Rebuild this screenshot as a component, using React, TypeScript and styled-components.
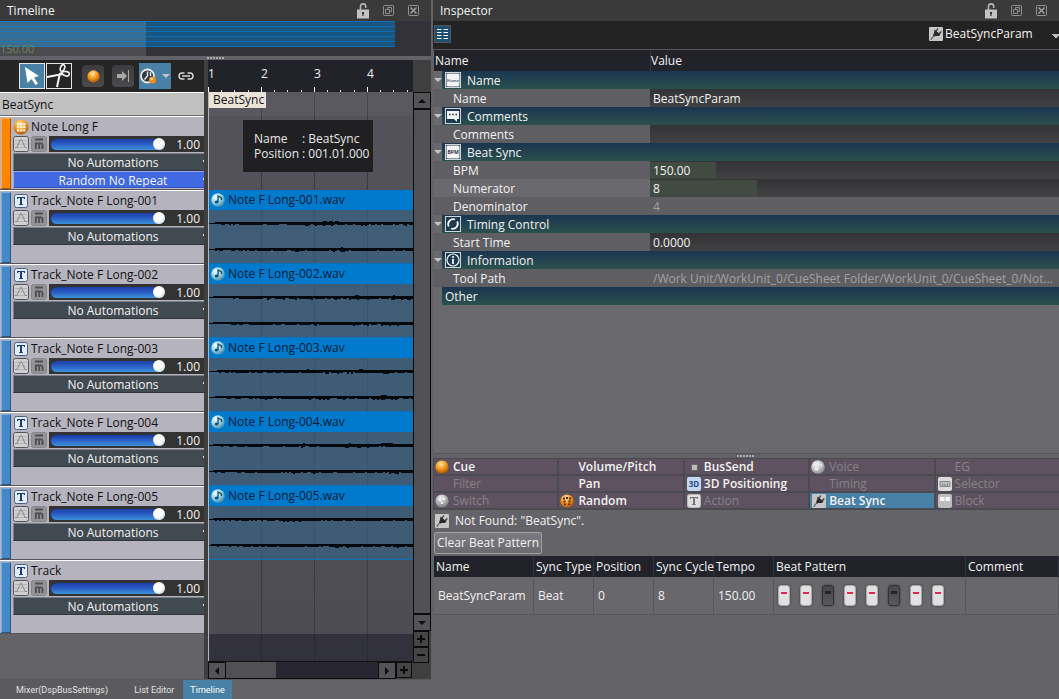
import React from "react";
import styled, { createGlobalStyle } from "styled-components";

const font = '"Open Sans", "Noto Sans", "Liberation Sans", sans-serif';

const GlobalStyle = createGlobalStyle`
  * { box-sizing: border-box; }
  body { margin: 0; background: #646367; color: #f2f2f2; font: 12px/18px ${font}; }
  button, input, select { font: inherit; color: inherit; margin: 0; padding: 0; border: 0; border-radius: 0; background: none; }
  select { appearance: none; }
  svg { display: block; flex: none; }
`;

const Page = styled.div`
  display: grid;
  grid-template-columns: minmax(0, 433fr) minmax(0, 626fr);
  min-height: 100vh;
`;

const Panel = styled.section<{ $divided?: boolean }>`
  display: flex;
  flex-direction: column;
  min-width: 0;
  background: #646367;
  border-right: ${(p) => (p.$divided ? "2px solid #626166" : "0")};
`;

/* ---------- title bars ---------- */

const TitleBar = styled.header`
  display: flex;
  align-items: center;
  height: 21px;
  padding-left: 7px;
  padding-right: 12px;
  background: #3a3a3a;
`;
const Title = styled.h2`
  flex: 1;
  margin: 0;
  font-size: 12px;
  font-weight: 400;
`;
const TitleActions = styled.div`
  display: flex;
  align-items: center;
  gap: 14px;
`;
const IconButton = styled.button`
  display: grid;
  place-items: center;
`;

const LockIcon = () => (
  <svg width="12" height="17" viewBox="1 0 12 17">
    <path d="M4.500 8V4.500a2.600 2.600 0 0 1 5.200 0V6" fill="none" stroke="#b4b4b4" strokeWidth="1.600" />
    <rect x="1" y="7.500" width="12" height="9" fill="#c2c2c2" />
    <path d="M6 10h2v2h-.4v2h-1.200v-2H6z" fill="#333" />
  </svg>
);
const FloatIcon = () => (
  <svg width="11" height="11" viewBox="0 0 11 11" fill="none" stroke="#a3a3a3">
    <rect x=".5" y=".5" width="10" height="10" rx="1" strokeOpacity=".8" />
    <path d="M4.500 4V2.500h4v4H7M2.500 4.500h4v4h-4z" strokeOpacity=".8" />
  </svg>
);
const CloseIcon = () => (
  <svg width="11" height="11" viewBox="0 0 11 11" fill="none" stroke="#a8a8a8">
    <rect x=".5" y=".5" width="10" height="10" rx="1" strokeOpacity=".8" />
    <path d="M2.500 2.500l6 6M8.500 2.500l-6 6" strokeWidth="1.300" />
  </svg>
);

function PanelTitle({ children }: { children: string }) {
  return (
    <TitleBar>
      <Title>{children}</Title>
      <TitleActions>
        <IconButton aria-label="Lock"><LockIcon /></IconButton>
        <IconButton aria-label="Float"><FloatIcon /></IconButton>
        <IconButton aria-label="Close"><CloseIcon /></IconButton>
      </TitleActions>
    </TitleBar>
  );
}

/* ---------- overview ---------- */

const Overview = styled.div`
  display: grid;
  grid-template-columns: 146fr 249fr 36fr;
  height: 35px;
  background: #333238;
`;
const OverviewPart = styled.div<{ $view?: boolean }>`
  display: flex;
  flex-direction: column;
  justify-content: flex-end;
  background:
    repeating-linear-gradient(${(p) => (p.$view ? "#1f78b8" : "#0c6fb5")} 0 1px, ${(p) => (p.$view ? "#3a6c90" : "#1a557f")} 1px 5px) 0 0 / 100% 26px no-repeat,
    ${(p) => (p.$view ? "#4c4b50" : "#333238")};
`;
const OverviewTempo = styled.span`
  font-size: 11px;
  line-height: 14px;
  color: #718258;
`;
const Splitter = styled.div`
  display: flex;
  align-items: center;
  justify-content: center;
  height: 4px;
  background: #636267;
`;
const Grip = styled.span`
  width: 18px;
  height: 2px;
  background: repeating-linear-gradient(90deg, #aaa 0 2px, transparent 2px 3px);
`;

/* ---------- timeline editor ---------- */

const Editor = styled.div`
  display: flex;
  flex: 1;
  background: #3f3f3f;
`;
const TrackColumn = styled.div`
  display: flex;
  flex-direction: column;
  flex: 0 0 204px;
  width: 204px;
  margin-right: 4px;
  background: #646367;
`;
const Toolbar = styled.div`
  display: flex;
  align-items: center;
  height: 32px;
  padding-left: 19px;
  background: #252525;
`;
const ToolButton = styled.button<{ $kind?: "mode" | "soft" | "menu"; $active?: boolean; $gap?: number }>`
  display: flex;
  align-items: center;
  justify-content: center;
  gap: 5px;
  margin-left: ${(p) => p.$gap ?? 0}px;
  width: ${(p) => (p.$kind === "mode" ? 26 : p.$kind === "menu" ? 32 : p.$kind === "soft" ? 22 : 16)}px;
  height: ${(p) => (p.$kind === "soft" ? 22 : 26)}px;
  border: ${(p) => (p.$kind === "mode" ? "1px solid #e4e4e4" : "0")};
  border-radius: ${(p) => (p.$kind === "soft" ? "4px" : "0")};
  background: ${(p) => (p.$active || p.$kind === "menu" ? "#4880a6" : p.$kind === "soft" ? "linear-gradient(#3c3c3f, #4a4a4d)" : "none")};
`;
const SequenceName = styled.div`
  height: 24px;
  padding-left: 2px;
  border-top: 1px solid #fff;
  border-bottom: 1px solid #6b6b70;
  background: #c0c0c0;
  color: #111;
  line-height: 23px;
`;

const Track = styled.article<{ $accent: string }>`
  display: grid;
  grid-template-columns: 10px minmax(0, 1fr);
  column-gap: 2px;
  height: 74px;
  padding-left: 1px;
  border-top: 1px solid #fff;
  border-bottom: 1px solid #55555a;
  background: #b5b4be;
  &::before {
    content: "";
    margin-top: 1px;
    background: ${(p) => p.$accent};
    border: 1px solid rgba(0, 0, 0, 0.35);
    border-top-color: rgba(255, 255, 255, 0.3);
    border-left-color: rgba(255, 255, 255, 0.3);
  }
`;
const TrackName = styled.div`
  display: flex;
  align-items: center;
  gap: 2px;
  height: 19px;
  color: #111;
  line-height: 16px;
  white-space: nowrap;
`;
const TrackControls = styled.div`
  display: flex;
  gap: 2px;
  height: 16px;
  margin-bottom: 1px;
`;
const Volume = styled.div`
  display: flex;
  flex: 1;
  align-items: center;
  justify-content: space-between;
  height: 16px;
  padding: 0 4px 0 2px;
  background: #333;
  color: #f4f4f4;
  output { padding-top: 2px; }
`;
const VolumeSlider = styled.input`
  appearance: none;
  width: 114px;
  height: 11px;
  border-radius: 6px;
  background: linear-gradient(#1b3da6, #2b60c8 50%, #3c93dc);
  &::-webkit-slider-thumb {
    appearance: none;
    width: 12px;
    height: 12px;
    border-radius: 6px;
    background: radial-gradient(circle at 40% 35%, #fff 40%, #c9c9c9);
  }
`;
const TrackSelect = styled.select<{ $mode?: boolean }>`
  display: block;
  width: 100%;
  height: ${(p) => (p.$mode ? 17 : 18)}px;
  padding-top: 1px;
  padding-left: 8px;
  text-align: center;
  text-align-last: center;
  line-height: 16px;
  color: #f4f4f4;
  border-top: 1px solid ${(p) => (p.$mode ? "#98a7ee" : "#7c7f88")};
  border-left: 1px solid ${(p) => (p.$mode ? "#98a7ee" : "#7c7f88")};
  border-bottom: 1px solid ${(p) => (p.$mode ? "#3a53c4" : "#30353c")};
  background:
    linear-gradient(#ddd, #ddd) right 0 top 6px / 1px 2px no-repeat,
    ${(p) => (p.$mode ? "#4169e1" : "#414951")};
`;

const BallIcon = ({ size = 14, gray = false, children }: { size?: number; gray?: boolean; children?: React.ReactNode }) => {
  const id = gray ? "ball-gray" : "ball-orange";
  return (
    <svg width={size} height={size} viewBox="0 0 14 14">
      <defs>
        <radialGradient id={id} cx=".42" cy=".28" r=".75">
          <stop offset="0" stopColor={gray ? "#f2f2f2" : "#ffe2a8"} />
          <stop offset=".5" stopColor={gray ? "#b5b5b5" : "#f59a1e"} />
          <stop offset="1" stopColor={gray ? "#777" : "#a65200"} />
        </radialGradient>
      </defs>
      <circle cx="7" cy="7" r="6.600" fill={`url(#${id})`} />
      {children}
    </svg>
  );
};
const GridBall = () => (
  <BallIcon size={16}>
    <path d="M3.500 3.500h2v2h-2zM6.200 3.500h2v2h-2zM8.900 3.500h2v2h-2zM3.500 6.200h2v2h-2zM6.200 6.200h2v2h-2zM8.900 6.200h2v2h-2zM3.500 8.900h2v2h-2zM6.200 8.900h2v2h-2zM8.900 8.900h2v2h-2z" fill="#fff6e4" />
  </BallIcon>
);
const TrackIcon = ({ gray = false }: { gray?: boolean }) => (
  <svg width="16" height="14" viewBox="0 0 16 14">
    <rect x="1.500" y=".5" width="13" height="13" rx="2" fill={gray ? "#dedede" : "#e3ecf8"} stroke={gray ? "#bbb" : "#46628c"} />
    <path d="M4 5V3h8v2h-1l-.3-1H9v6l1 .3V11H6v-.7L7 10V4H5.300L5 5z" fill={gray ? "#777" : "#17407c"} />
  </svg>
);
const CurveIcon = () => (
  <svg width="16" height="16" viewBox="0 0 16 16">
    <rect x=".5" y=".5" width="15" height="15" rx="2" fill="#cfcfd0" stroke="#54545a" />
    <path d="M2 4.500h12M2 8h12M2 11.500h12" stroke="#b4b4b6" />
    <path d="M2 11.500h2L7.500 3.500h1L12 11.500h2" fill="none" stroke="#8a8a8d" />
  </svg>
);
const MuteIcon = () => (
  <svg width="16" height="16" viewBox="0 0 16 16">
    <rect x=".5" y=".5" width="15" height="15" rx="2" fill="#949496" stroke="#85858a" />
    <path d="M4 3.500h8" stroke="#4f4f52" strokeWidth="2" />
    <path d="M4.900 13V6.500M4 7.400h6.200a1.500 1.500 0 0 1 1.300 1.400V13M8.200 13V7.500" fill="none" stroke="#4f4f52" strokeWidth="1.900" />
  </svg>
);

function TrackHeader({ name, mode }: { name: string; mode?: string }) {
  return (
    <Track $accent={mode ? "#ff8400" : "#4389ca"}>
      <div>
        <TrackName>{mode ? <GridBall /> : <TrackIcon />}{name}</TrackName>
        <TrackControls>
          <IconButton aria-label={`Curve ${name}`}><CurveIcon /></IconButton>
          <IconButton aria-label={`Mute ${name}`}><MuteIcon /></IconButton>
          <Volume>
            <VolumeSlider type="range" min="0" max="1" step="0.01" defaultValue="1" aria-label={`Volume ${name}`} />
            <output>1.00</output>
          </Volume>
        </TrackControls>
        <TrackSelect aria-label={`Automations ${name}`}><option>No Automations</option></TrackSelect>
        {mode && <TrackSelect $mode aria-label={`Playback ${name}`}><option>{mode}</option></TrackSelect>}
      </div>
    </Track>
  );
}

const LaneColumn = styled.div`
  display: flex;
  flex-direction: column;
  flex: 1;
  min-width: 0;
`;
const Ruler = styled.div`
  display: grid;
  grid-template-columns: repeat(4, 53px);
  height: 32px;
  overflow: hidden;
  background-color: #22222b;
  background-image:
    linear-gradient(90deg, #fff 1px, transparent 1px),
    linear-gradient(90deg, transparent 13px, #ddd 13px 14px, transparent 14px 26px, #ddd 26px 27px, transparent 27px 40px, #ddd 40px 41px, transparent 41px);
  background-size: 53px 5px, 53px 2px;
  background-position: 0 100%;
  background-repeat: repeat-x;
  line-height: 28px;
`;
const Lanes = styled.div`
  position: relative;
  flex: 1;
  display: flex;
  flex-direction: column;
  border-left: 1px solid #b5b5b5;
  background:
    repeating-linear-gradient(90deg, transparent 0 52px, #3b3b3f 52px 53px),
    linear-gradient(#54535c, #4d4c54);
`;
const MarkerLane = styled.div`
  height: 24px;
  background: rgba(115, 115, 122, 0.2);
`;
const Marker = styled.div`
  width: fit-content;
  padding: 0 2px 0 4px;
  background: #e9e4d7;
  color: #16161c;
  line-height: 16px;
`;
const GroupLane = styled.div`
  height: 74px;
`;
const Clip = styled.div`
  height: 74px;
  border-bottom: 1px solid #0a72b8;
  background: rgba(51, 101, 138, 0.6);
`;
const ClipName = styled.div`
  display: flex;
  align-items: center;
  gap: 3px;
  height: 20px;
  padding-left: 2px;
  background: #007acc;
  color: #0a1b33;
  white-space: nowrap;
`;
const LaneEnd = styled.div`
  flex: 1;
  margin-top: 74px;
  background: rgba(30, 30, 42, 0.55);
`;
const Hint = styled.dl`
  position: absolute;
  left: 34px;
  top: 28px;
  display: grid;
  grid-template-columns: 48px 1fr;
  width: 130px;
  margin: 0;
  padding: 11px;
  background: rgba(30, 30, 32, 0.96);
  line-height: 15px;
  color: #e8e8e8;
  dt, dd { margin: 0; white-space: nowrap; }
`;

const NoteIcon = ({ gray = false }: { gray?: boolean }) => (
  <svg width="14" height="14" viewBox="0 0 14 14">
    <defs>
      <radialGradient id={gray ? "note-gray" : "note-blue"} cx=".35" cy=".3" r=".8">
        <stop offset="0" stopColor="#f4fcff" />
        <stop offset=".55" stopColor={gray ? "#bcbcbc" : "#8fcbe0"} />
        <stop offset="1" stopColor={gray ? "#888" : "#2f7fa0"} />
      </radialGradient>
    </defs>
    <circle cx="7" cy="7" r="6.800" fill={`url(#${gray ? "note-gray" : "note-blue"})`} />
    <path d="M7 9V3l3.500 2v2M7 9" fill="none" stroke={gray ? "#eee" : "#14506e"} strokeWidth="1.300" />
    <ellipse cx="5.600" cy="9" rx="1.900" ry="1.600" fill={gray ? "#eee" : "#14506e"} />
  </svg>
);

function wavePath(seed: number, center: number) {
  let s = seed * 7919 + 13;
  const next = () => {
    s = (s * 16807) % 2147483647;
    return s / 2147483647;
  };
  let d = "";
  let level = 0;
  for (let x = 0; x < 204; x += 2) {
    level = level * 0.8 + next() * 0.32;
    const grow = Math.min(1, 0.3 + x / 120);
    const up = Math.round(0.4 + level * grow);
    const down = Math.round(0.3 + level * grow * next() * 1.6);
    const h = x < 28 && next() < 0.4 ? 1 : up + down + 1;
    d += `M${x} ${center - up}h2v${h}h-2z`;
  }
  return d;
}
const Waveform = ({ seed }: { seed: number }) => (
  <svg width="100%" height="53" viewBox="0 0 204 53" preserveAspectRatio="none" shapeRendering="crispEdges">
    <path d={wavePath(seed, 13) + wavePath(seed + 40, 39)} fill="#05080c" />
    <path d="M0 13h204v1H0zM0 39h204v1H0z" fill="#05080c" />
  </svg>
);

/* ---------- scroll bars ---------- */

const ScrollColumn = styled.div`
  display: flex;
  flex-direction: column;
  flex: 0 0 18px;
  padding: 32px 0 16px;
`;
const ScrollRow = styled.div`
  display: flex;
  height: 18px;
  padding-right: 1px;
  border-top: 1px solid #111;
`;
const ScrollButton = styled.button<{ $dark?: boolean }>`
  display: grid;
  place-items: center;
  flex: none;
  width: 18px;
  height: 17px;
  border: 1px solid #0c0c0c;
  background: ${(p) => (p.$dark ? "#454548" : "#545357")};
`;
const ZoomButton = styled(ScrollButton)`
  width: 16px;
  height: 16px;
`;
const ScrollTrack = styled.div<{ $vertical?: boolean }>`
  flex: 1;
  border: solid #0c0c0c;
  border-width: ${(p) => (p.$vertical ? "1px 1px" : "0 0 1px")};
  background: ${(p) => (p.$vertical ? "#525155" : "linear-gradient(90deg, #515055 33%, #272631 33%)")};
`;
const Arrow = ({ turn }: { turn: number }) => (
  <svg width="8" height="8" viewBox="0 0 8 8"><path d="M0 6L4 2l4 4z" fill="#0e0e10" transform={`rotate(${turn} 4 4)`} /></svg>
);
const Plus = ({ minus = false }: { minus?: boolean }) => (
  <svg width="8" height="8" viewBox="0 0 8 8"><path d={minus ? "M0 4h8" : "M0 4h8M4 0v8"} stroke="#0b0b0b" strokeWidth="2" /></svg>
);

const DockTabs = styled.nav`
  display: flex;
  height: 20px;
  background: #636267;
  border-top: 1px solid #59585c;
`;
const DockTab = styled.button<{ $active?: boolean }>`
  padding: 0 ${(p) => (p.$active ? 7 : 9)}px;
  font-family: Roboto, "Liberation Sans", sans-serif;
  font-size: 9px;
  line-height: 18px;
  white-space: nowrap;
  color: ${(p) => (p.$active ? "#fff" : "#e2e2e2")};
  background: ${(p) => (p.$active ? "#4880a6" : "#5b5a5e")};
  &:first-child { padding: 0 17px 0 16px; }
`;

/* ---------- inspector ---------- */

const InspectorBar = styled.div`
  display: flex;
  align-items: center;
  justify-content: space-between;
  height: 29px;
  padding-left: 1px;
  padding-bottom: 2px;
  border-bottom: 1px solid #55545a;
  background: #232323;
`;
const ParamPicker = styled.label`
  display: flex;
  align-items: center;
  gap: 1px;
`;
const ParamSelect = styled.select`
  width: 114px;
  height: 18px;
  background: linear-gradient(45deg, transparent 50%, #bbb 50%) right 3px top 9px / 4px 4px no-repeat,
    linear-gradient(-45deg, transparent 50%, #bbb 50%) right -1px top 9px / 4px 4px no-repeat;
`;
const PropertyTable = styled.table`
  width: 100%;
  padding-left: 1px;
  border-spacing: 0;
  table-layout: fixed;
  th, td { padding: 0; height: 18px; text-align: left; font-weight: 400; }
  thead th { height: 21px; padding-left: 1px; background: #22222b; }
  thead th + th { padding-left: 0; border-left: 1px solid #36363f; }
`;
const NameCol = styled.col`
  width: 216px;
`;
const TwistyIcon = () => (
  <svg width="8" height="4" viewBox="0 0 8 4"><path d="M0 0h8L4 4z" fill="#c4c4c4" /></svg>
);
const GroupRow = styled.div`
  display: flex;
  align-items: center;
  background: #69686c;
`;
const Gutter = styled.button`
  flex: none;
  width: 8px;
  height: 18px;
  display: grid;
  place-items: center;
`;
const GroupTitle = styled.div`
  display: flex;
  flex: 1;
  align-items: center;
  gap: 6px;
  height: 18px;
  padding-left: 3px;
  background: linear-gradient(#1b3551, #2a504d);
  span { padding-top: 2px; }
`;
const PropertyLabel = styled.label<{ $alt?: boolean }>`
  display: block;
  height: 18px;
  padding-top: 1px;
  padding-left: 19px;
  line-height: 17px;
  background: ${(p) => (p.$alt ? "#6a696d" : "#5f5e62")};
`;
const PropertyInput = styled.input<{ $fill?: number }>`
  display: block;
  width: 100%;
  height: 18px;
  padding-top: 1px;
  padding-left: 3px;
  text-overflow: ellipsis;
  background:
    linear-gradient(#414b42, #414b42) 0 1px / ${(p) => p.$fill ?? 0}px 16px no-repeat,
    linear-gradient(#333335, #424245);
  &:disabled { color: #a2a2a4; background: #5f5e62; }
`;
const Spacer = styled.div`
  flex: 1;
  margin-left: 1px;
  background: #69686c;
  border-bottom: 1px solid #55545a;
`;

type IconKind = "name" | "comment" | "bpm" | "cycle" | "info";
const GroupIcon = ({ kind }: { kind: IconKind }) => (
  <svg width="16" height="16" viewBox="0 0 16 16">
    <rect x=".5" y=".5" width="15" height="15" fill="#1c3b50" stroke="#cfd6d8" />
    {(kind === "name" || kind === "bpm") && <rect x="1.500" y="1.500" width="13" height="13" rx="1" fill="#f4f4f4" />}
    {kind === "name" && <text x="8" y="9.500" textAnchor="middle" fontSize="4" fontWeight="700" fill="#667">Home</text>}
    {kind === "bpm" && <text x="8" y="10" textAnchor="middle" fontSize="5" fontWeight="700" fill="#334">BPM</text>}
    {kind === "comment" && <><path d="M2 3h12v8h-2v3L9 11H2z" fill="#f4f4f4" /><path d="M4 6.500h1.500M7.200 6.500h1.500M10.500 6.500H12" stroke="#234" strokeWidth="1.300" /></>}
    {kind === "cycle" && <g fill="none" stroke="#f4f4f4" strokeWidth="1.800"><path d="M3.800 10.500A5 5 0 0 1 10 3.500" /><path d="M12.200 5.500A5 5 0 0 1 6 12.500" /></g>}
    {kind === "info" && <g fill="none" stroke="#f4f4f4"><circle cx="8" cy="8" r="6" strokeWidth="1.200" /><path d="M8 4v1.700M8 6.800V12" strokeWidth="1.800" /></g>}
  </svg>
);
const PlugIcon = () => (
  <svg width="16" height="14" viewBox="0 0 16 14">
    <rect x="1" y="0" width="14" height="14" rx="1" fill="#c6c6c6" />
    <path d="M3 13c0-2 1.500-3 3.500-4.500" fill="none" stroke="#6b6b6b" strokeWidth="1.200" />
    <path d="M6.500 2.500l6 5-1.500 1.500H7.500L6 9.500 5 8l1-2z" fill="#2b2b2b" />
    <path d="M8 4.500L9.700 1.500M11 7l2.300-2.500" stroke="#3a3a3a" strokeWidth="1.300" />
  </svg>
);

type Property = { label: string; value: string; fill?: number; off?: boolean; alt?: boolean };
const groups: { title: string; icon?: IconKind; rows: Property[] }[] = [
  { title: "Name", icon: "name", rows: [{ label: "Name", value: "BeatSyncParam" }] },
  { title: "Comments", icon: "comment", rows: [{ label: "Comments", value: "" }] },
  {
    title: "Beat Sync",
    icon: "bpm",
    rows: [
      { label: "BPM", value: "150.00", fill: 66 },
      { label: "Numerator", value: "8", fill: 107, alt: true },
      { label: "Denominator", value: "4", off: true },
    ],
  },
  { title: "Timing Control", icon: "cycle", rows: [{ label: "Start Time", value: "0.0000" }] },
  {
    title: "Information",
    icon: "info",
    rows: [{ label: "Tool Path", value: "/Work Unit/WorkUnit_0/CueSheet Folder/WorkUnit_0/CueSheet_0/Note Long F/BeatSyncParam", off: true }],
  },
  { title: "Other", rows: [] },
];

/* ---------- parameter tabs ---------- */

const ParamTabs = styled.div`
  display: grid;
  grid-template-columns: repeat(5, minmax(0, 1fr));
  gap: 2px;
  padding: 1px 0 2px 1px;
  background: #4a4a52;
`;
const ParamTab = styled.button<{ $active?: boolean }>`
  display: grid;
  grid-template-columns: 16px 1fr;
  align-items: center;
  column-gap: 2px;
  height: 15px;
  padding-left: 1px;
  overflow: hidden;
  text-align: left;
  line-height: 15px;
  font-weight: 600;
  white-space: nowrap;
  background: ${(p) => (p.$active ? "#4880a6" : "#5f5260")};
  &:disabled { font-weight: 400; color: #858288; }
`;
const TabIcon = ({ kind }: { kind?: string }) => {
  switch (kind) {
    case "cue": return <BallIcon />;
    case "switch": return <BallIcon gray><path d="M4 5h2v2H4zM8 4h2v2H8zM6 8h2v2H6z" fill="#eee" /></BallIcon>;
    case "random": return <BallIcon><path d="M3 3.500h2v2H3zM6 3h2v2H6zM9 3.500h2v2H9zM3.500 6.500h2v2h-2zM8.500 6.500h2v2h-2zM4 9.500h2v1.500H4zM8 9.500h2v1.500H8z" fill="#5b2b00" /></BallIcon>;
    case "voice": return <NoteIcon gray />;
    case "send": return <svg width="16" height="14"><rect x="5.500" y="4.500" width="6" height="6" fill="#bbb" stroke="#666" /></svg>;
    case "3d": return <svg width="16" height="14"><rect x="1" width="14" height="14" rx="2" fill="#c6d7f0" /><text x="8" y="10" textAnchor="middle" fontSize="8" fontWeight="700" fill="#274b8c">3D</text></svg>;
    case "action": return <TrackIcon gray />;
    case "plug": return <PlugIcon />;
    case "selector": return <svg width="16" height="14"><rect x="1" width="14" height="14" rx="2" fill="#dcdcdc" /><path d="M3 4.500h10v5H3z" fill="#bbb" stroke="#888" /><path d="M5 8h1M7.500 8h1M10 8h1" stroke="#444" /></svg>;
    case "block": return <svg width="16" height="14"><rect x="1" width="14" height="14" rx="2" fill="#bdbdbd" /><path d="M3 3h4.500v4H3zM8.500 3H13v4H8.500z" fill="#f6f6f6" /></svg>;
    default: return <span />;
  }
};
const paramTabs: { name: string; icon?: string; off?: boolean }[] = [
  { name: "Cue", icon: "cue" }, { name: "Volume/Pitch" }, { name: "BusSend", icon: "send" }, { name: "Voice", icon: "voice", off: true }, { name: "EG", off: true },
  { name: "Filter", off: true }, { name: "Pan" }, { name: "3D Positioning", icon: "3d" }, { name: "Timing", off: true }, { name: "Selector", icon: "selector", off: true },
  { name: "Switch", icon: "switch", off: true }, { name: "Random", icon: "random" }, { name: "Action", icon: "action", off: true }, { name: "Beat Sync", icon: "plug" }, { name: "Block", icon: "block", off: true },
];

/* ---------- beat sync pane ---------- */

const BeatPane = styled.div`
  display: flex;
  flex-direction: column;
  align-items: flex-start;
  min-height: 189px;
  padding-left: 1px;
`;
const Status = styled.p`
  display: flex;
  align-items: center;
  gap: 5px;
  height: 22px;
  margin: 0;
`;
const ClearButton = styled.button`
  height: 22px;
  margin: 0 0 2px;
  padding: 0 2px;
  border: 1px solid #a0a0a0;
  border-radius: 2px;
  background: linear-gradient(#7c7b7f, #6b6a6e);
`;
const BeatTable = styled.table`
  width: 100%;
  border-spacing: 0;
  table-layout: fixed;
  th, td { text-align: left; font-weight: 400; white-space: nowrap; }
  th { height: 21px; padding: 0 0 0 2px; background: #22222b; border-right: 1px solid #33333d; }
  td { height: 38px; padding: 0 0 0 4px; background: #68676b; border: solid #58575b; border-width: 0 1px 1px 0; }
`;
const BeatCol = styled.col<{ $width?: number }>`
  width: ${(p) => (p.$width ? p.$width + "px" : "auto")};
`;
const Beats = styled.div`
  display: flex;
  gap: 10px;
`;
const Beat = styled.input`
  appearance: none;
  width: 12px;
  height: 21px;
  border-radius: 3px;
  border: 1px solid #333337;
  background: linear-gradient(#242426, #242426) 2px 5px / 6px 3px no-repeat, linear-gradient(#47474a, #59595c);
  box-shadow: 0 0 2px #333;
  &:checked {
    border-color: #a9a9ab;
    background: linear-gradient(#e2264d, #e2264d) 2px 6px / 6px 2px no-repeat, #e1e1e1;
  }
`;

const clips = ["001", "002", "003", "004", "005"];

export default function App() {
  return (
    <>
      <GlobalStyle />
      <Page>
        <Panel $divided>
          <PanelTitle>Timeline</PanelTitle>
          <Overview>
            <OverviewPart $view><OverviewTempo>150.00</OverviewTempo></OverviewPart>
            <OverviewPart />
          </Overview>
          <Splitter><Grip /></Splitter>
          <Editor>
            <TrackColumn>
              <Toolbar>
                <ToolButton $kind="mode" $active aria-label="Select">
                  <svg width="20" height="22" viewBox="0 0 20 22"><path d="M3 2l14 9-5 1.500 4 6-2.500 1.500-4-6L5.500 18z" fill="#fff" /></svg>
                </ToolButton>
                <ToolButton $kind="mode" $gap={1} aria-label="Cut">
                  <svg width="24" height="24" viewBox="0 0 24 24" fill="none" stroke="#f5f5f5" strokeWidth="1.600">
                    <path d="M0 13l16-3M10 23l3-14" strokeWidth="2" />
                    <ellipse cx="15.500" cy="4" rx="2" ry="3.500" transform="rotate(20 15.500 4)" />
                    <path d="M14 9c2-2 5-2 8-.5 1 2-.5 4-3 3.500-2-.5-3-1.500-5-3z" />
                  </svg>
                </ToolButton>
                <ToolButton $kind="soft" $gap={10} aria-label="Add cue"><BallIcon size={13} /></ToolButton>
                <ToolButton $kind="soft" $gap={8} aria-label="Snap to end">
                  <svg width="14" height="14" viewBox="0 0 14 14"><path d="M1 5h5V2l5 5-5 5V9H1z" fill="#a8a8a8" /><path d="M12.500 1v12" stroke="#a8a8a8" /></svg>
                </ToolButton>
                <ToolButton $kind="menu" $gap={5} aria-label="Playback timing">
                  <svg width="17" height="17" viewBox="0 0 17 17">
                    <circle cx="7.500" cy="8" r="6.500" fill="#2c3b46" stroke="#e8e8e8" strokeWidth="1.800" />
                    <path d="M7.500 3.500V8L4.500 11.500M10.500 4v4" fill="none" stroke="#e8e8e8" strokeWidth="1.400" />
                    <circle cx="12.500" cy="12" r="3.600" fill="#f08a22" /><circle cx="11.800" cy="11" r="1.300" fill="#ffd9a0" />
                  </svg>
                  <TwistyIcon />
                </ToolButton>
                <ToolButton $gap={7} aria-label="Link">
                  <svg width="16" height="8" viewBox="0 0 16 8" fill="none" stroke="#d8d8d8" strokeWidth="1.400"><path d="M6.500 1H4a3 3 0 0 0 0 6h2.500M9.500 1H12a3 3 0 0 1 0 6H9.500" /><path d="M4 4h8" stroke="#a8a8a8" strokeWidth="2" /></svg>
                </ToolButton>
              </Toolbar>
              <SequenceName>BeatSync</SequenceName>
              <TrackHeader name="Note Long F" mode="Random No Repeat" />
              {clips.map((c) => <TrackHeader key={c} name={`Track_Note F Long-${c}`} />)}
              <TrackHeader name="Track" />
            </TrackColumn>
            <LaneColumn>
              <Ruler>{["1", "2", "3", "4"].map((n) => <span key={n}>{n}</span>)}</Ruler>
              <Lanes>
                <MarkerLane><Marker>BeatSync</Marker></MarkerLane>
                <GroupLane />
                {clips.map((c, i) => (
                  <Clip key={c}>
                    <ClipName><NoteIcon />Note F Long-{c}.wav</ClipName>
                    <Waveform seed={i + 3} />
                  </Clip>
                ))}
                <LaneEnd />
                <Hint>
                  <dt>Name</dt><dd>: BeatSync</dd>
                  <dt>Position</dt><dd>: 001.01.000</dd>
                </Hint>
              </Lanes>
              <ScrollRow>
                <ScrollButton aria-label="Scroll left"><Arrow turn={-90} /></ScrollButton>
                <ScrollTrack />
                <ScrollButton aria-label="Scroll right"><Arrow turn={90} /></ScrollButton>
                <ZoomButton $dark aria-label="Zoom in time"><Plus /></ZoomButton>
              </ScrollRow>
            </LaneColumn>
            <ScrollColumn>
              <ScrollButton aria-label="Scroll up"><Arrow turn={0} /></ScrollButton>
              <ScrollTrack $vertical />
              <ScrollButton aria-label="Scroll down"><Arrow turn={180} /></ScrollButton>
              <ZoomButton $dark aria-label="Zoom in tracks"><Plus /></ZoomButton>
              <ZoomButton $dark aria-label="Zoom out tracks"><Plus minus /></ZoomButton>
            </ScrollColumn>
          </Editor>
          <DockTabs>
            <DockTab>Mixer(DspBusSettings)</DockTab>
            <DockTab>List Editor</DockTab>
            <DockTab $active>Timeline</DockTab>
          </DockTabs>
        </Panel>

        <Panel>
          <PanelTitle>Inspector</PanelTitle>
          <InspectorBar>
            <IconButton aria-label="Columns">
              <svg width="17" height="18" viewBox="0 0 17 18">
                <rect x=".5" y=".5" width="16" height="17" fill="#1d4e70" stroke="#54565a" />
                <path d="M3 4.500h4.500M9.500 4.500H14M3 7.500h4.500M9.500 7.500H14M3 10.500h4.500M9.500 10.500H14M3 13.500h4.500M9.500 13.500H14" stroke="#f5f5f5" />
              </svg>
            </IconButton>
            <ParamPicker>
              <PlugIcon />
              <ParamSelect aria-label="Parameter"><option>BeatSyncParam</option></ParamSelect>
            </ParamPicker>
          </InspectorBar>
          <PropertyTable>
            <colgroup><NameCol /><col /></colgroup>
            <thead><tr><th>Name</th><th>Value</th></tr></thead>
            {groups.map((g) => (
              <tbody key={g.title}>
                <tr>
                  <th colSpan={2}>
                    <GroupRow>
                      <Gutter aria-label={`Toggle ${g.title}`}>{g.icon && <TwistyIcon />}</Gutter>
                      <GroupTitle>{g.icon && <GroupIcon kind={g.icon} />}<span>{g.title}</span></GroupTitle>
                    </GroupRow>
                  </th>
                </tr>
                {g.rows.map((r) => {
                  const id = `${g.title}-${r.label}`.replace(/ /g, "-");
                  return (
                    <tr key={r.label}>
                      <td><PropertyLabel htmlFor={id} $alt={r.alt}>{r.label}</PropertyLabel></td>
                      <td><PropertyInput id={id} defaultValue={r.value} disabled={r.off} $fill={r.fill} /></td>
                    </tr>
                  );
                })}
              </tbody>
            ))}
          </PropertyTable>
          <Spacer />
          <Splitter><Grip /></Splitter>
          <ParamTabs>
            {paramTabs.map((t) => (
              <ParamTab key={t.name} disabled={t.off} $active={t.name === "Beat Sync"}>
                <TabIcon kind={t.icon} />{t.name}
              </ParamTab>
            ))}
          </ParamTabs>
          <BeatPane>
            <Status><PlugIcon />Not Found: "BeatSync".</Status>
            <ClearButton>Clear Beat Pattern</ClearButton>
            <BeatTable>
              <colgroup>
                {[100, 60, 60, 60, 60, 192, 0].map((w, i) => <BeatCol key={i} $width={w} />)}
              </colgroup>
              <thead>
                <tr>{["Name", "Sync Type", "Position", "Sync Cycle", "Tempo", "Beat Pattern", "Comment"].map((h) => <th key={h}>{h}</th>)}</tr>
              </thead>
              <tbody>
                <tr>
                  <td>BeatSyncParam</td><td>Beat</td><td>0</td><td>8</td><td>150.00</td>
                  <td>
                    <Beats>
                      {[1, 1, 0, 1, 1, 0, 1, 1].map((on, i) => (
                        <Beat key={i} type="checkbox" defaultChecked={!!on} aria-label={`Beat ${i + 1}`} />
                      ))}
                    </Beats>
                  </td>
                  <td />
                </tr>
              </tbody>
            </BeatTable>
          </BeatPane>
        </Panel>
      </Page>
    </>
  );
}
